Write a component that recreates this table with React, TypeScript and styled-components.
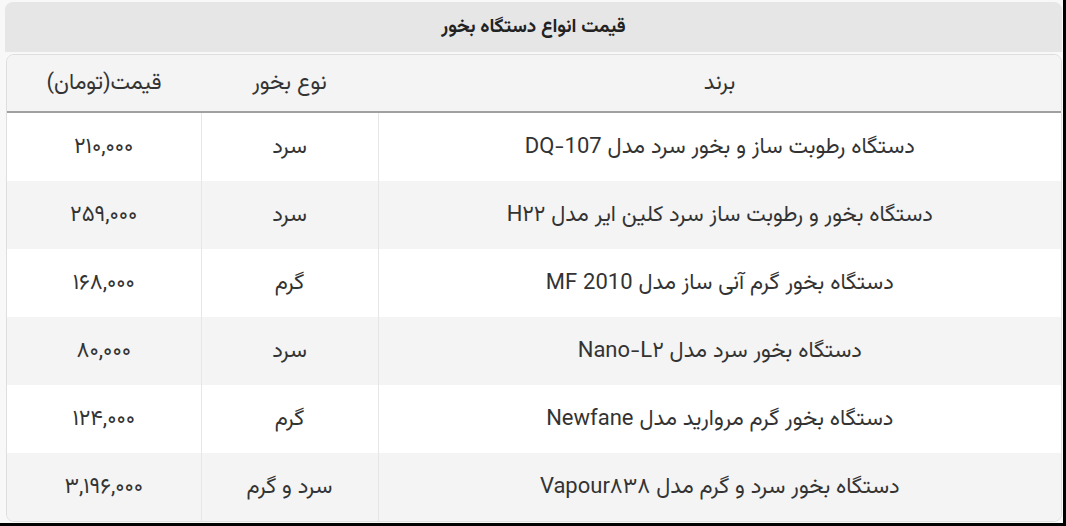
import React from "react";
import styled, { createGlobalStyle } from "styled-components";

const Global = createGlobalStyle`
  html, body { margin: 0; padding: 0; background: #000; }
  body { font-family: "Vazirmatn", "Noto Sans Arabic", "DejaVu Sans", sans-serif; }
`;

const Page = styled.div`
  width: 1063px;
  height: 523px;
  box-sizing: border-box;
  padding: 2px 1px 0 5px;
  background: #f8f8f8;
  direction: rtl;
`;

const Title = styled.div`
  height: 50px;
  display: flex;
  align-items: center;
  justify-content: center;
  background: #e6e6e6;
  border-radius: 8px 8px 0 0;
  font-size: 19px;
  font-weight: bold;
  color: #222;
  margin-bottom: 2px;
`;

const TableBox = styled.div`
  border: 1px solid #dedede;
  border-radius: 8px;
  overflow: hidden;
  width: 1056px;
  box-sizing: border-box;
`;

const Table = styled.table`
  width: 100%;
  border-collapse: collapse;
  table-layout: fixed;
  font-size: 22px;
  color: #333;
`;

const HeadCell = styled.th<{ $w?: number }>`
  height: 56px;
  background: #f4f4f4;
  font-weight: normal;
  text-align: center;
  border-bottom: 2px solid #a0a0a0;
  padding: 0;
  ${(p) => (p.$w ? `width: ${p.$w}px;` : "")}
`;

const Row = styled.tr<{ $alt: boolean }>`
  background: ${(p) => (p.$alt ? "#f4f4f4" : "#ffffff")};
  & + & td { border-top: 1px solid #e6e6e6; }
`;

const Cell = styled.td`
  height: 68px;
  padding: 0;
  text-align: center;
  border-left: 1px solid #e6e6e6;
  &:last-child { border-left: none; }
`;

const rows = [
  ["دستگاه رطوبت ساز و بخور سرد مدل DQ-107", "سرد", "۲۱۰,۰۰۰"],
  ["دستگاه بخور و رطوبت ساز سرد کلین ایر مدل H۲۲", "سرد", "۲۵۹,۰۰۰"],
  ["دستگاه بخور گرم آنی ساز مدل MF 2010", "گرم", "۱۶۸,۰۰۰"],
  ["دستگاه بخور سرد مدل Nano-L۲", "سرد", "۸۰,۰۰۰"],
  ["دستگاه بخور گرم مروارید مدل Newfane", "گرم", "۱۲۴,۰۰۰"],
  ["دستگاه بخور سرد و گرم مدل Vapour۸۳۸", "سرد و گرم", "۳,۱۹۶,۰۰۰"],
];

export default function App() {
  return (
    <>
      <Global />
      <Page>
        <Title>قیمت انواع دستگاه بخور</Title>
        <TableBox>
          <Table>
            <thead>
              <tr>
                <HeadCell>برند</HeadCell>
                <HeadCell $w={177}>نوع بخور</HeadCell>
                <HeadCell $w={194}>قیمت(تومان)</HeadCell>
              </tr>
            </thead>
            <tbody>
              {rows.map((r, i) => (
                <Row key={i} $alt={i % 2 === 1}>
                  <Cell>{r[0]}</Cell>
                  <Cell>{r[1]}</Cell>
                  <Cell>{r[2]}</Cell>
                </Row>
              ))}
            </tbody>
          </Table>
        </TableBox>
      </Page>
    </>
  );
}
